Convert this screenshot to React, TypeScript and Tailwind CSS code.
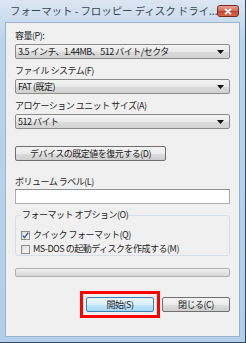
const font = "[font-family:'Noto_Sans_CJK_JP','Liberation_Sans',sans-serif]";

function Arrow() {
  return (
    <svg width="7" height="4" viewBox="0 0 7 4" className="shrink-0">
      <path d="M0 0h7L3.5 4z" fill="#111" />
    </svg>
  );
}

function Combo({ value }: { value: string }) {
  return (
    <div className="flex h-[15px] items-center justify-between rounded-[2px] border border-[#8b8b8b] bg-[linear-gradient(#f4f4f4,#e9e9e9_50%,#dadada_51%,#d3d3d3)] pl-[2px] pr-[5px]">
      <span className="whitespace-nowrap text-[9px] leading-[13px] tracking-[-0.5px] text-[#1a1a1a]">
        {value}
      </span>
      <Arrow />
    </div>
  );
}

function Label({ children }: { children: React.ReactNode }) {
  return (
    <div className="h-[12px] whitespace-nowrap text-[9px] leading-[12px] tracking-[-0.5px] text-[#1e1e1e]">
      {children}
    </div>
  );
}

function Check({ checked, label }: { checked?: boolean; label: string }) {
  return (
    <div className="flex h-[12px] items-center gap-[3px]">
      <div className="flex h-[9px] w-[9px] shrink-0 items-center justify-center border border-[#8e8f8f] bg-[linear-gradient(135deg,#dcdcdc,#fafafa)]">
        {checked && (
          <svg width="7" height="7" viewBox="0 0 7 7">
            <path d="M0.8 3.6l1.8 2 3.6-5" fill="none" stroke="#3d5aa0" strokeWidth="1.4" />
          </svg>
        )}
      </div>
      <span className="whitespace-nowrap text-[9px] leading-[12px] tracking-[-0.5px] text-[#1e1e1e]">
        {label}
      </span>
    </div>
  );
}

function Btn({ children, primary, className = "" }: { children: React.ReactNode; primary?: boolean; className?: string }) {
  return (
    <div
      className={`flex h-[15px] items-center justify-center rounded-[2px] border text-[9px] leading-[13px] tracking-[-0.5px] text-[#1a1a1a] ${
        primary
          ? "border-[#3c7fb1] bg-[linear-gradient(#eaf6fd,#d9f0fc_50%,#bee6fd_51%,#a7d9f5)]"
          : "border-[#707070] bg-[linear-gradient(#f2f2f2,#ebebeb_50%,#dddddd_51%,#cfcfcf)]"
      } ${className}`}
    >
      {children}
    </div>
  );
}

export default function App() {
  return (
    <div className={`flex h-[343px] w-[246px] flex-col border-b border-r border-[#33495e] bg-[linear-gradient(#dbe6f2,#bcd3ec_40px,#b3cdea)] ${font}`}>
      {/* Title bar */}
      <div className="flex h-[22px] shrink-0 items-center justify-between pl-[10px] pr-[6px]">
        <span className="whitespace-nowrap text-[10.5px] tracking-[-0.1px] text-[#3a4654]">
          フォーマット - フロッピー ディスク ドライ...
        </span>
        <div className="flex h-[12px] w-[23px] items-center justify-center rounded-[3px] border border-[#7a2a22] bg-[linear-gradient(#e8a493,#d2664f_50%,#c2432c_51%,#d46a4e)]">
          <svg width="8" height="7" viewBox="0 0 8 7">
            <path d="M1 0.8l6 5.4M7 0.8l-6 5.4" stroke="#fff" strokeWidth="1.8" />
          </svg>
        </div>
      </div>

      {/* Client area */}
      <div className="mx-[5px] mb-[5px] flex flex-1 flex-col border border-[#9bb3cc] bg-[#f0f0f0] px-[9px] pt-[7px]">
        <Label>容量(P):</Label>
        <div className="mt-[2px]">
          <Combo value="3.5 インチ、1.44MB、512 バイト/セクタ" />
        </div>

        <div className="mt-[6px]">
          <Label>ファイル システム(F)</Label>
        </div>
        <div className="mt-[2px]">
          <Combo value="FAT (既定)" />
        </div>

        <div className="mt-[6px]">
          <Label>アロケーション ユニット サイズ(A)</Label>
        </div>
        <div className="mt-[2px]">
          <Combo value="512 バイト" />
        </div>

        <Btn className="mt-[17px] w-[151px]">デバイスの既定値を復元する(D)</Btn>

        <div className="mt-[15px]">
          <Label>ボリューム ラベル(L)</Label>
        </div>
        <div className="mt-[1px] h-[15px] border border-[#abadb3] border-t-[#8e9297] bg-white" />

        <fieldset className="mt-[6px] h-[46px] rounded-[3px] border border-[#d5dfe5] pl-[5px]">
          <legend className="px-[1px] text-[9px] leading-[10px] tracking-[-0.5px] text-[#1e1e1e]">
            フォーマット オプション(O)
          </legend>
          <div className="mt-[9px] flex flex-col gap-[2px]">
            <Check checked label="クイック フォーマット(Q)" />
            <Check label="MS-DOS の起動ディスクを作成する(M)" />
          </div>
        </fieldset>

        <div className="mt-[12px] h-[9px] rounded-[2px] border border-[#b2b2b2] bg-[linear-gradient(#f3f3f3,#e2e2e2_50%,#d6d6d6)]" />

        <div className="mt-[14px] flex justify-end gap-[2px]">
          <div className="border-[3px] border-[#ff0000] p-[3px]">
            <Btn primary className="w-[68px]">開始(S)</Btn>
          </div>
          <div className="pt-[6px]">
            <Btn className="w-[68px]">閉じる(C)</Btn>
          </div>
        </div>
      </div>
    </div>
  );
}
